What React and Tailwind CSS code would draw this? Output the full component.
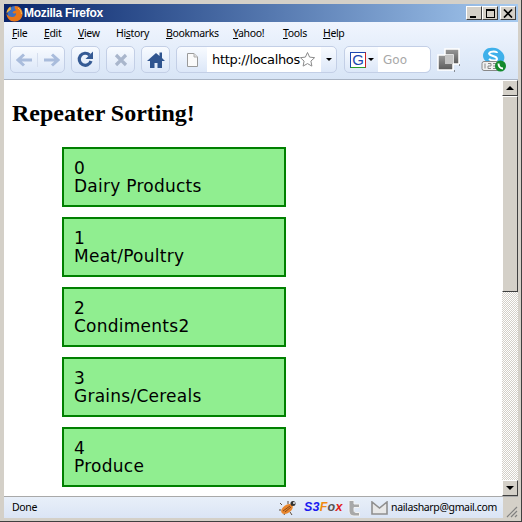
import React from 'react'

const menus = [
  { pre: '', key: 'F', post: 'ile', cls: 'w-[32px]' },
  { pre: '', key: 'E', post: 'dit', cls: 'w-[34px]' },
  { pre: '', key: 'V', post: 'iew', cls: 'w-[38px]' },
  { pre: 'Hi', key: 's', post: 'tory', cls: 'w-[50px]' },
  { pre: '', key: 'B', post: 'ookmarks', cls: 'w-[67px]' },
  { pre: '', key: 'Y', post: 'ahoo!', cls: 'w-[50px]' },
  { pre: '', key: 'T', post: 'ools', cls: 'w-[40px]' },
  { pre: '', key: 'H', post: 'elp', cls: 'w-[30px]' },
]

const categories = ['Dairy Products', 'Meat/Poultry', 'Condiments2', 'Grains/Cereals', 'Produce']

const btn = 'flex items-center justify-center h-[27px] rounded-[5px] border border-[#c3cfe6] bg-gradient-to-b from-[#f8fbff] to-[#dce7f8]'

function FirefoxLogo() {
  return (
    <svg width="17" height="17" viewBox="0 0 17 17">
      <circle cx="9" cy="8.500" r="7.500" fill="#3f6fc0" />
      <path d="M9 1C13.500 1 16.500 4.500 16.500 9 16.500 13.500 13 16.500 8.500 16.500 4 16.500.5 13 .5 8.500 2 11 4 12 6 12 8.500 12 10.500 10.500 10 8 9 9 7 8.500 6.500 7.500 7.500 6 9 5.500 10.500 5.500 9 4 8 2.500 9 1Z" fill="#e8761a" />
      <path d="M.5 8.500C.5 5.500 2 3 4.500 1.500L5 4.500C3.500 5.500 2 7 .5 8.500Z" fill="#f4b23c" />
      <path d="M12 3c2 1.500 3.500 3.500 3.500 6" fill="none" stroke="#f6c04a" />
    </svg>
  )
}

function Arrow({ flip }) {
  return (
    <svg width="17" height="14" viewBox="0 0 17 14" className={flip ? 'scale-x-[-1]' : ''}>
      <path d="M8 1.500 2 7l6 5.500M3 7h13" fill="none" stroke="#a9bcdc" strokeWidth="3" />
    </svg>
  )
}

function PageIcon() {
  return (
    <svg width="13" height="16" viewBox="0 0 13 16">
      <path d="M1.500 1.500h6.500l3.500 3.500v9.500h-10Z" fill="#fafafa" stroke="#9a9a9a" />
      <path d="M8 1.500V5h3.500" fill="#e0e0e0" stroke="#b0b0b0" />
    </svg>
  )
}

function BugIcon() {
  return (
    <svg width="18" height="16" viewBox="0 0 18 16" className="mr-[7px]">
      <g stroke="#5a4a3a" strokeWidth="1">
        <path d="M3 5 1 3M6 13l-1 2M11 12l2 3M9 4l0-3M2 10H0" />
      </g>
      <ellipse cx="8" cy="9" rx="6.500" ry="4" transform="rotate(-35 8 9)" fill="#e8862e" />
      <path d="M4 11 11 6M6 12l6-5" stroke="#8a4a16" />
      <circle cx="14" cy="3.500" r="2.500" fill="#333" />
      <circle cx="15" cy="3" r="1" fill="#eee" />
    </svg>
  )
}

export default function App() {
  return (
    <div className="w-[522px] h-[522px] flex flex-col overflow-hidden bg-[#d4d0c8] pt-[4px] pl-[4px] pr-[3px] pb-[3px] border-r border-b border-[#404040] font-['Liberation_Sans',sans-serif]">
      <div className="flex items-center h-[18px] shrink-0 bg-gradient-to-r from-[#0a246a] to-[#a6caf0] pl-[2px] pr-[2px]">
        <FirefoxLogo />
        <span className="ml-[1px] text-[12px] font-bold text-white font-['Liberation_Sans',sans-serif] tracking-[-0.3px]">Mozilla Firefox</span>
        <div className="ml-auto flex">
          {['min', 'max'].map(k => (
            <div key={k} className="w-[16px] h-[14px] bg-[#d4d0c8] border border-t-white border-l-white border-r-[#404040] border-b-[#404040] flex items-center justify-center">
              {k === 'min'
                ? <div className="w-[6px] h-[2px] bg-black mt-[7px] mr-[2px]" />
                : <div className="w-[9px] h-[9px] border border-t-2 border-black" />}
            </div>
          ))}
          <div className="ml-[2px] w-[16px] h-[14px] bg-[#d4d0c8] border border-t-white border-l-white border-r-[#404040] border-b-[#404040] flex items-center justify-center">
            <svg width="10" height="9" viewBox="0 0 10 9"><path d="M1 0.500 9 8.500M9 0.500 1 8.500" stroke="#000" strokeWidth="1.700" /></svg>
          </div>
        </div>
      </div>

      <div className="shrink-0 h-[58px] bg-gradient-to-b from-[#f0f5fe] to-[#d8e5f6] border-b border-[#a9b4c4]">
        <div className="flex items-center h-[22px] pt-[1px] pl-[8px] text-[10.500px] text-black font-['Noto_Sans',sans-serif] tracking-[-0.35px]">
          {menus.map(m => (
            <div key={m.key} className={m.cls}>
              {m.pre}<span className="underline">{m.key}</span>{m.post}
            </div>
          ))}
        </div>
        <div className="flex items-center h-[31px] pl-[6px]">
          <div className={`${btn} w-[55px]`}>
            <div className="flex-1 flex justify-center border-r border-[#d5deee]"><Arrow /></div>
            <div className="flex-1 flex justify-center"><Arrow flip /></div>
          </div>
          <div className={`${btn} w-[29px] ml-[6px]`}>
            <svg width="19" height="19" viewBox="0 0 19 19">
              <path d="M15 11a6 6 0 1 1-1.500-6" fill="none" stroke="#355a94" strokeWidth="3.200" />
              <path d="M17 1.500v7.500h-7.500Z" fill="#355a94" />
            </svg>
          </div>
          <div className={`${btn} w-[29px] ml-[6px]`}>
            <svg width="14" height="14" viewBox="0 0 14 14"><path d="M2 2l10 10M12 2 2 12" stroke="#a9b6cc" strokeWidth="3.200" /></svg>
          </div>
          <div className={`${btn} w-[29px] ml-[6px]`}>
            <svg width="20" height="18" viewBox="0 0 20 18">
              <path d="M10 2 1 10h3v7h4.500v-5h3v5H16v-7h3l-3-3V1.500h-2.500v3.500Z" fill="#2f548f" />
            </svg>
          </div>
          <div className="flex items-center h-[27px] w-[161px] ml-[6px] rounded-[5px] border border-[#c3cfe6] overflow-hidden bg-gradient-to-b from-[#f8fbff] to-[#dce7f8]">
            <div className="w-[30px] flex justify-center"><PageIcon /></div>
            <div className="w-[114px] h-full bg-white flex items-center pl-[5px] text-[13px] text-black font-['DejaVu_Sans',sans-serif] tracking-[-0.35px]">
              <span className="w-[87px] whitespace-nowrap">http://localhos</span>
              <svg width="17" height="17" viewBox="0 0 17 17">
                <path d="M8.500 1.500l2.100 4.600 5 .6-3.700 3.400 1 5-4.400-2.500-4.400 2.500 1-5L1.400 6.700l5-.6Z" fill="#fff" stroke="#8a8a8a" />
              </svg>
            </div>
            <div className="flex-1 flex justify-center">
              <div className="border-x-[3px] border-x-transparent border-t-[3px] border-t-black" />
            </div>
          </div>
          <div className="flex items-center h-[27px] w-[87px] ml-[7px] rounded-[5px] border border-[#c3cfe6] overflow-hidden bg-gradient-to-b from-[#f8fbff] to-[#dce7f8]">
            <div className="w-[33px] flex items-center pl-[5px] gap-[2px]">
              <div className="w-[16px] h-[16px] bg-white border border-t-[#1c47b0] border-l-[#1c47b0] border-b-[#2a9a2a] border-r-[#d02020] flex items-center justify-center text-[15px] leading-none text-[#1c47b0] font-['Liberation_Sans',sans-serif]">G</div>
              <div className="border-x-[3px] border-x-transparent border-t-[3px] border-t-black" />
            </div>
            <div className="flex-1 h-full bg-white flex items-center pl-[5px] text-[12px] text-[#a8a8a8] font-['DejaVu_Sans',sans-serif] rounded-r-[5px]">
              <span className="w-[24px] overflow-hidden whitespace-nowrap">Google</span>
            </div>
          </div>
          <svg width="24" height="24" viewBox="0 0 24 24" className="ml-[6px]">
            <defs>
              <linearGradient id="win" x1="0" y1="0" x2="0" y2="1">
                <stop offset="0" stopColor="#9a9a9a" />
                <stop offset="1" stopColor="#5a5a5a" />
              </linearGradient>
            </defs>
            <rect x="8" y="1" width="14" height="15" fill="url(#win)" stroke="#fff" strokeWidth="1.500" />
            <rect x="1" y="7" width="15" height="15" fill="url(#win)" stroke="#fff" strokeWidth="1.500" />
            <rect x="8" y="7" width="8" height="9" fill="#c4c4c4" />
            <path d="M22 17h1M17 23h1" stroke="#333" />
          </svg>
          <svg width="26" height="26" viewBox="0 0 26 26" className="ml-[20px]">
            <path d="M9 1C13 0 18 1 21 5 24 8 24 12 22 15H6C2 13 1 8 3 5 4 3 6 1 9 1Z" fill="#3fb0ea" />
            <path d="M8 6c2-2 8-2 8 0M8 12c2 2 8 2 8 0M8 6c0 4 8 2 8 6" fill="none" stroke="#fff" strokeWidth="2" />
            <rect x="1" y="14.500" width="17" height="9" rx="2" fill="#f0f0f0" stroke="#888" />
            <path d="M4 16.500v5M7 16.500h3v2.500H7v2.500h3M12 16.500h3v5h-3M12 19h3" fill="none" stroke="#888" />
            <circle cx="19.500" cy="19" r="5.500" fill="#128a2c" />
            <path d="M17.500 16.500c0 3 2 5 4.500 5" fill="none" stroke="#fff" strokeWidth="2" />
          </svg>
        </div>
      </div>

      <div className="flex-1 min-h-0 flex bg-white">
        <div className="flex-1 overflow-hidden pl-[8px]">
          <h1 className="mt-[19px] text-[24px] leading-[28px] font-bold text-black font-['Liberation_Serif',serif]">Repeater Sorting!</h1>
          <div className="ml-[50px] mt-[20px] flex flex-col gap-[10px]">
            {categories.map((c, i) => (
              <div key={c} className="w-[224px] h-[60px] shrink-0 border-2 border-[#008000] bg-[#90ee90] pl-[10px] pt-[10px] text-[17px] leading-[18px] tracking-[0.25px] text-black font-['DejaVu_Sans',sans-serif]">
                <div>{i}</div>
                <div>{c}</div>
              </div>
            ))}
          </div>
        </div>
        <div className="w-[16px] flex flex-col bg-[repeating-conic-gradient(#d4d0c8_0%_25%,#ffffff_0%_50%)] bg-[length:2px_2px]">
          <div className="h-[16px] bg-[#d4d0c8] border border-t-white border-l-white border-r-[#404040] border-b-[#404040] flex items-center justify-center">
            <div className="border-x-[4px] border-x-transparent border-b-[4px] border-b-black" />
          </div>
          <div className="h-[196px] bg-[#d4d0c8] border border-t-white border-l-white border-r-[#404040] border-b-[#404040]" />
          <div className="flex-1" />
          <div className="h-[16px] bg-[#d4d0c8] border border-t-white border-l-white border-r-[#404040] border-b-[#404040] flex items-center justify-center">
            <div className="border-x-[4px] border-x-transparent border-t-[4px] border-t-black" />
          </div>
        </div>
      </div>

      <div className="shrink-0 h-[22px] flex items-center border-t border-[#a9a9a9] bg-gradient-to-b from-[#e8eff9] to-[#dbe5f5] pl-[8px] text-[10.500px] text-black font-['Noto_Sans',sans-serif] tracking-[-0.35px]">
        <span>Done</span>
        <div className="ml-auto flex items-center h-full">
          <BugIcon />
          <span className="w-[35px] mr-[8px] text-[12.500px] font-bold italic text-[#1a1af0] font-['Liberation_Sans',sans-serif] tracking-[0.2px] whitespace-nowrap">S3<span className="text-[#f08a10]">F</span><span className="text-[#555]">o</span><span className="text-[#e02020]">x</span></span>
          <svg width="15" height="18" viewBox="0 0 15 18" className="mr-[9px]">
            <path d="M2 1.500h5v3.500h5.500v3.500H7v3c0 1.500 1 2 2 2h3.500v3.500H7C4 17 2 15 2 12Z" fill="#a8a8a8" stroke="#f2f2f2" />
          </svg>
          <svg width="17" height="14" viewBox="0 0 17 14" className="mr-[3px]">
            <path d="M1 13V1l7.500 6L16 1v12Z" fill="#e8e8e8" stroke="#8f8f8f" strokeWidth="1.600" />
          </svg>
          <span className="mr-[6px]">nailasharp@gmail.com</span>
          <div className="w-[15px] h-full bg-[#d4d0c8] flex items-end justify-end">
            <svg width="13" height="13" viewBox="0 0 13 13"><path d="M12 2 2 12M12 6 6 12M12 10 10 12" stroke="#808080" strokeWidth="1.200" /></svg>
          </div>
        </div>
      </div>
    </div>
  )
}
